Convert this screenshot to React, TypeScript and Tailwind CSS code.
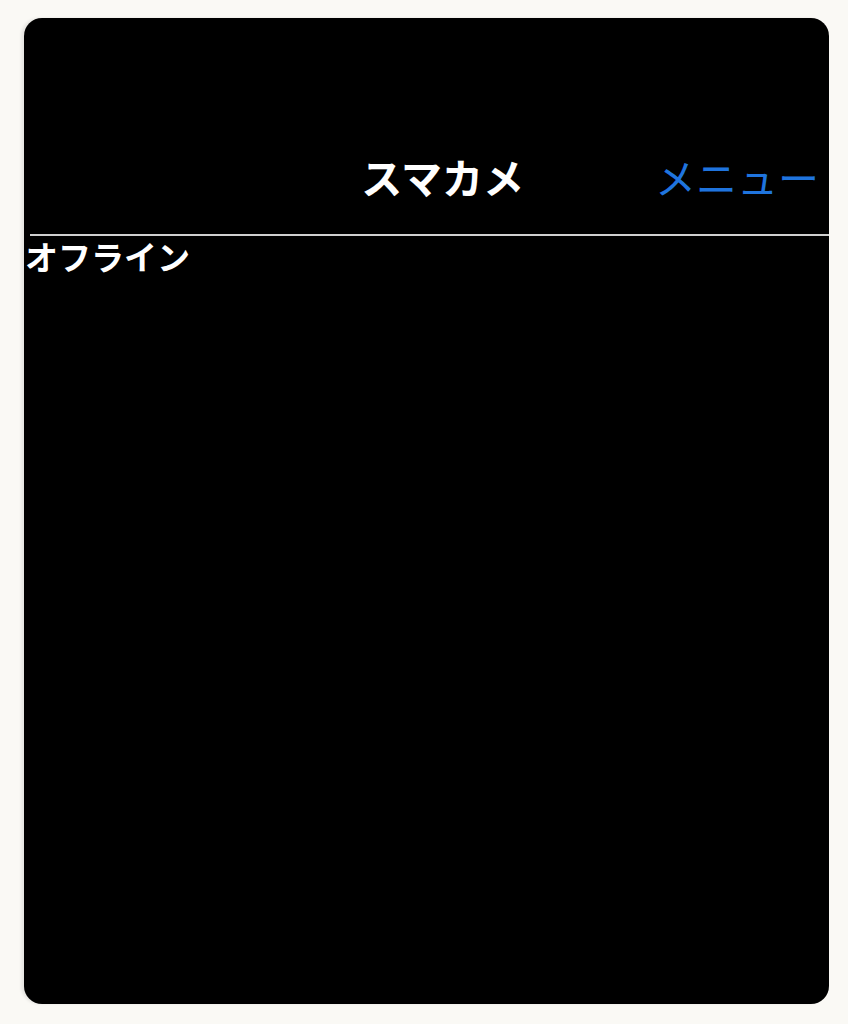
export default function App() {
  return (
    <div className="min-h-screen bg-[#faf9f5] pt-[18px] pl-[24px] pr-[19px] pb-[20px] font-['Noto_Sans_CJK_JP','Noto_Sans',sans-serif]">
      <div className="h-[986px] bg-black rounded-[18px] shadow-[-3px_0_3px_rgba(0,0,0,0.08)] flex flex-col overflow-hidden">
        <header className="h-[216px] flex items-end justify-end gap-[131px] pr-[10px] pb-[28px]">
          <h1 className="text-[41px] leading-[60px] font-bold text-white">スマカメ</h1>
          <button className="text-[41px] leading-[60px] text-[#1f74de]">メニュー</button>
        </header>
        <div className="ml-[6px] h-[2px] bg-[#cfcfcf]" />
        <p className="text-[33px] leading-[40px] font-bold text-white pl-[1px]">オフライン</p>
      </div>
    </div>
  );
}
